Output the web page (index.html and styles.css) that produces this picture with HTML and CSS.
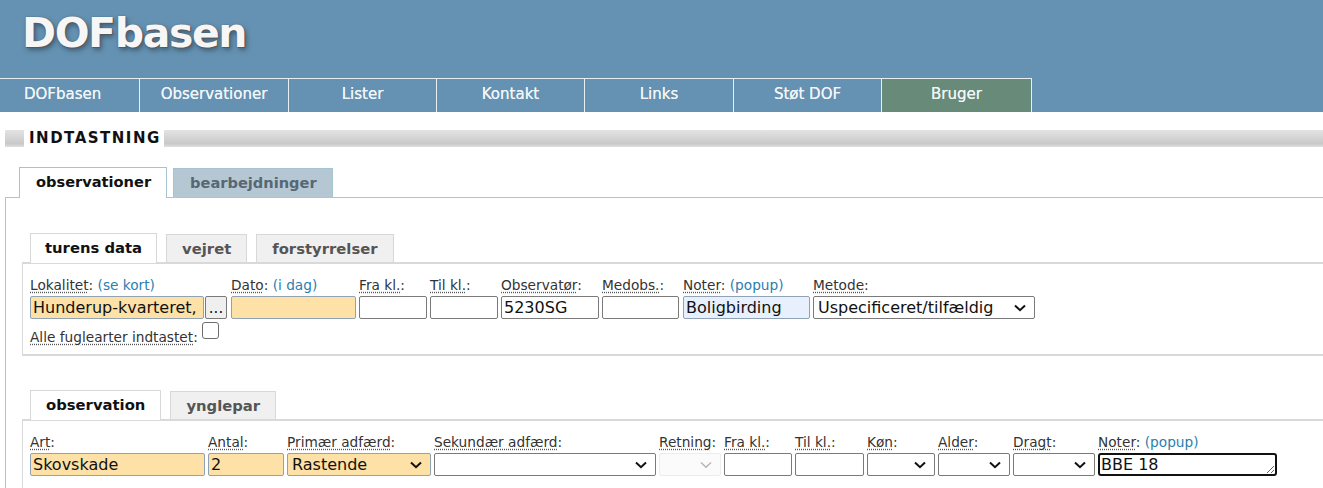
FILE: index.html
```html
<!DOCTYPE html>
<html lang="da">
<head>
<meta charset="utf-8">
<title>DOFbasen - Indtastning</title>
<link rel="stylesheet" href="styles.css">
</head>
<body>
<header class="top">
  <div class="logo">DOFbasen</div>
  <nav class="menu">
    <a class="menu-item m1">DOFbasen</a>
    <a class="menu-item m2">Observationer</a>
    <a class="menu-item m3">Lister</a>
    <a class="menu-item m4">Kontakt</a>
    <a class="menu-item m5">Links</a>
    <a class="menu-item m6">Støt DOF</a>
    <a class="menu-item m7 user">Bruger</a>
  </nav>
</header>

<div class="titlebar"><span class="title">INDTASTNING</span></div>

<div class="outer-tabs">
  <span class="otab active">observationer</span>
  <span class="otab">bearbejdninger</span>
</div>
<div class="outer-panel">

  <div class="itabs">
    <span class="itab active">turens data</span>
    <span class="itab">vejret</span>
    <span class="itab">forstyrrelser</span>
  </div>
  <div class="ipanel p1">
    <div class="frow">
      <div class="fld">
        <div class="lbl"><span class="ab">Lokalitet</span>: <a class="lnk">(se kort)</a></div>
        <div class="ctl-group">
          <input class="inp yel w-lok" value="Hunderup-kvarteret, Odense">
          <button class="dots">...</button>
        </div>
      </div>
      <div class="fld">
        <div class="lbl"><span class="ab">Dato</span>: <a class="lnk">(i dag)</a></div>
        <input class="inp yel w-dato" value="">
      </div>
      <div class="fld">
        <div class="lbl"><span class="ab">Fra kl.</span>:</div>
        <input class="inp w-kl" value="">
      </div>
      <div class="fld">
        <div class="lbl"><span class="ab">Til kl.</span>:</div>
        <input class="inp w-kl" value="">
      </div>
      <div class="fld">
        <div class="lbl"><span class="ab">Observatør</span>:</div>
        <input class="inp w-obs" value="5230SG">
      </div>
      <div class="fld">
        <div class="lbl"><span class="ab">Medobs.</span>:</div>
        <input class="inp w-med" value="">
      </div>
      <div class="fld f-not">
        <div class="lbl"><span class="ab">Noter</span>: <a class="lnk">(popup)</a></div>
        <input class="inp auto w-not" value="Boligbirding">
      </div>
      <div class="fld">
        <div class="lbl"><span class="ab">Metode</span>:</div>
        <span class="selw">
          <select class="sel w-met"><option>Uspecificeret/tilfældig</option></select>
          <svg class="chev" width="12" height="8" viewBox="0 0 12 8"><path d="M1 1.5 L6 6.2 L11 1.5" fill="none" stroke="#111" stroke-width="2"/></svg>
        </span>
      </div>
    </div>
    <div class="crow">
      <span class="lbl"><span class="ab">Alle fuglearter indtastet</span>:</span>
      <span class="chk"></span>
    </div>
  </div>

  <div class="itabs second">
    <span class="itab active">observation</span>
    <span class="itab">ynglepar</span>
  </div>
  <div class="ipanel p2">
    <div class="frow">
      <div class="fld">
        <div class="lbl"><span class="ab">Art</span>:</div>
        <input class="inp yel w-art" value="Skovskade">
      </div>
      <div class="fld">
        <div class="lbl"><span class="ab">Antal</span>:</div>
        <input class="inp yel w-ant" value="2">
      </div>
      <div class="fld">
        <div class="lbl"><span class="ab">Primær adfærd</span>:</div>
        <span class="selw">
          <select class="sel yel w-pri"><option>Rastende</option></select>
          <svg class="chev" width="12" height="8" viewBox="0 0 12 8"><path d="M1 1.5 L6 6.2 L11 1.5" fill="none" stroke="#111" stroke-width="2"/></svg>
        </span>
      </div>
      <div class="fld">
        <div class="lbl"><span class="ab">Sekundær adfærd</span>:</div>
        <span class="selw">
          <select class="sel w-sek"><option></option></select>
          <svg class="chev" width="12" height="8" viewBox="0 0 12 8"><path d="M1 1.5 L6 6.2 L11 1.5" fill="none" stroke="#111" stroke-width="2"/></svg>
        </span>
      </div>
      <div class="fld">
        <div class="lbl"><span class="ab">Retning</span>:</div>
        <span class="selw">
          <select class="sel w-ret" disabled><option></option></select>
          <svg class="chev" width="12" height="8" viewBox="0 0 12 8"><path d="M1 1.5 L6 6.2 L11 1.5" fill="none" stroke="#b5b5b5" stroke-width="1.4"/></svg>
        </span>
      </div>
      <div class="fld">
        <div class="lbl"><span class="ab">Fra kl.</span>:</div>
        <input class="inp w-kl2" value="">
      </div>
      <div class="fld">
        <div class="lbl"><span class="ab">Til kl.</span>:</div>
        <input class="inp w-til2" value="">
      </div>
      <div class="fld">
        <div class="lbl"><span class="ab">Køn</span>:</div>
        <span class="selw">
          <select class="sel w-kon"><option></option></select>
          <svg class="chev" width="12" height="8" viewBox="0 0 12 8"><path d="M1 1.5 L6 6.2 L11 1.5" fill="none" stroke="#111" stroke-width="2"/></svg>
        </span>
      </div>
      <div class="fld">
        <div class="lbl"><span class="ab">Alder</span>:</div>
        <span class="selw">
          <select class="sel w-ald"><option></option></select>
          <svg class="chev" width="12" height="8" viewBox="0 0 12 8"><path d="M1 1.5 L6 6.2 L11 1.5" fill="none" stroke="#111" stroke-width="2"/></svg>
        </span>
      </div>
      <div class="fld">
        <div class="lbl"><span class="ab">Dragt</span>:</div>
        <span class="selw">
          <select class="sel w-dra"><option></option></select>
          <svg class="chev" width="12" height="8" viewBox="0 0 12 8"><path d="M1 1.5 L6 6.2 L11 1.5" fill="none" stroke="#111" stroke-width="2"/></svg>
        </span>
      </div>
      <div class="fld">
        <div class="lbl"><span class="ab">Noter</span>: <a class="lnk">(popup)</a></div>
        <textarea class="ta w-ta">BBE 18</textarea>
      </div>
    </div>
  </div>
</div>
</body>
</html>
```
FILE: styles.css
```css
* { box-sizing: border-box; }
html, body { margin: 0; padding: 0; background: #fff; }
body {
  font-family: "DejaVu Sans", Verdana, sans-serif;
  color: #222;
  overflow: hidden;
  height: 488px;
}

.top {
  background: #6592b2;
  height: 112px;
  display: flex;
  flex-direction: column;
  justify-content: flex-end;
}
.logo {
  font-size: 41px;
  font-weight: bold;
  color: #f6f6f6;
  text-shadow: 0 0 1px #4a4a4a, 1px 1px 0 #5a5a5a, 2px 3px 5px rgba(30,45,60,0.55);
  padding-left: 22px;
  height: 78px;
  line-height: 66px;
  letter-spacing: -1.4px;
}
.menu { display: flex; height: 34px; }
.menu-item {
  border-top: 1px solid #e6eef4;
  border-right: 1px solid #e6eef4;
  color: #f2f5f7;
  font-size: 15px;
  text-align: center;
  line-height: 30px;
  flex: none;
  text-shadow: 0 0 0.4px #f2f5f7;
}
.m1 { width: 140px; text-align: left; padding-left: 24px; }
.m2 { width: 149px; }
.m3 { width: 148px; }
.m4 { width: 148px; }
.m5 { width: 149px; }
.m6 { width: 148px; }
.m7 { width: 150px; }
.menu-item.user { background: #678b78; }

.titlebar {
  margin: 18px 0 0 5px;
  height: 17px;
  background: linear-gradient(#e3e3e3, #c9c9c9 80%, #dedede);
  padding-left: 19px;
  display: flex;
}
.title {
  background: #fff;
  font-weight: bold;
  font-size: 15px;
  letter-spacing: 1.5px;
  color: #111;
  padding: 0 3px 0 5px;
  line-height: 17px;
}

.outer-tabs {
  display: flex;
  gap: 6px;
  margin: 20px 0 0 19px;
  height: 30px;
  position: relative;
  z-index: 1;
}
.otab {
  font-size: 14.6px;
  font-weight: bold;
  padding: 0 15px 0 16px;
  line-height: 28px;
  border: 1px solid #a6c3d2;
  border-bottom: none;
  background: #b6c7d4;
  color: #566775;
  height: 30px;
}
.otab.active { background: #fff; color: #111; height: 31px; }
.otab:nth-child(2) { height: 29px; margin-top: 1px; }

.outer-panel {
  margin-left: 5px;
  border-top: 1px solid #a6c7d3;
  border-left: 1px solid #a6c7d3;
  padding: 35px 0 0 16px;
  height: 300px;
}

.itabs {
  display: flex;
  gap: 9px;
  margin-left: 8px;
  height: 29px;
  position: relative;
  z-index: 1;
}
.itab {
  font-size: 14.8px;
  font-weight: bold;
  padding: 0 15px;
  line-height: 27px;
  border: 1px solid #d8d8d8;
  border-bottom: none;
  background: #f0f0f0;
  color: #555;
  height: 28px;
  margin-top: 1px;
}
.itab.active { background: #fff; color: #111; height: 30px; margin-top: 0; padding: 0 14px; }
.itabs.second .itab.active { padding: 0 15px; }
.itabs.second { margin-top: 34px; }

.ipanel {
  border-top: 2px solid #d9d9d9;
  border-left: 1px solid #d9d9d9;
  border-bottom: 2px solid #d9d9d9;
  padding: 13px 0 0 7px;
}
.p1 { height: 94px; }
.p2 { height: 80px; border-bottom: none; }

.frow { display: flex; gap: 3px; align-items: flex-end; }
.fld { display: flex; flex-direction: column; }
.f-not { margin-left: 1px; }
.lbl {
  font-size: 13.7px;
  line-height: 16px;
  color: #333;
  margin-bottom: 3px;
  white-space: nowrap;
}
.ab { text-decoration: underline dotted #555; text-underline-offset: 2px; }
.lnk { color: #2a7eb0; }

.ctl-group { display: flex; gap: 1px; margin-right: 1px; }
.inp, .sel, .ta, .dots {
  font-family: "DejaVu Sans", Verdana, sans-serif;
  font-size: 16px;
  height: 23px;
  border: 1px solid #7a7a7a;
  border-radius: 2px;
  background: #fff;
  color: #111;
  margin: 0;
}
.inp { padding: 0 2px; }
.yel { background-color: #fde1a7; border-color: #8fa3b4; }
.auto { background: #e8f0fe; border-color: #8fa3b4; }
.dots { width: 22px; padding: 0; background: #efefef; font-size: 15px; line-height: 18px; }

.selw { position: relative; display: inline-block; height: 23px; }
.sel {
  appearance: none;
  -webkit-appearance: none;
  padding: 0 24px 0 4px;
  display: block;
}
.sel.yel { background-color: #fde1a7; }
.chev { position: absolute; right: 9px; top: 8px; pointer-events: none; }
.sel[disabled] { background: #fafafa; border-color: #e4e4e4; color: #aaa; }
.ta {
  border: 2px solid #111;
  border-radius: 3px;
  padding: 0 1px;
  resize: both;
  overflow: hidden;
  line-height: 19px;
  outline: none;
}

.w-lok { width: 174px; }
.w-dato { width: 125px; }
.w-kl { width: 68px; }
.w-obs { width: 98px; }
.w-med { width: 77px; }
.w-not { width: 127px; }
.w-met { width: 222px; }

.crow { display: flex; align-items: center; margin-top: 2px; gap: 4px; }
.crow .lbl { margin: 8px 0 0 0; }
.chk {
  width: 17px;
  height: 17px;
  border: 1px solid #6e6e6e;
  border-radius: 3px;
  background: #fff;
  margin-top: -6px;
}

.w-art { width: 175px; }
.w-ant { width: 76px; }
.w-pri { width: 144px; }
.w-sek { width: 222px; }
.w-ret { width: 62px; }
.w-kl2 { width: 68px; }
.w-til2 { width: 69px; }
.w-kon { width: 68px; }
.w-ald { width: 72px; }
.w-dra { width: 82px; }
.w-ta { width: 179px; }
```
